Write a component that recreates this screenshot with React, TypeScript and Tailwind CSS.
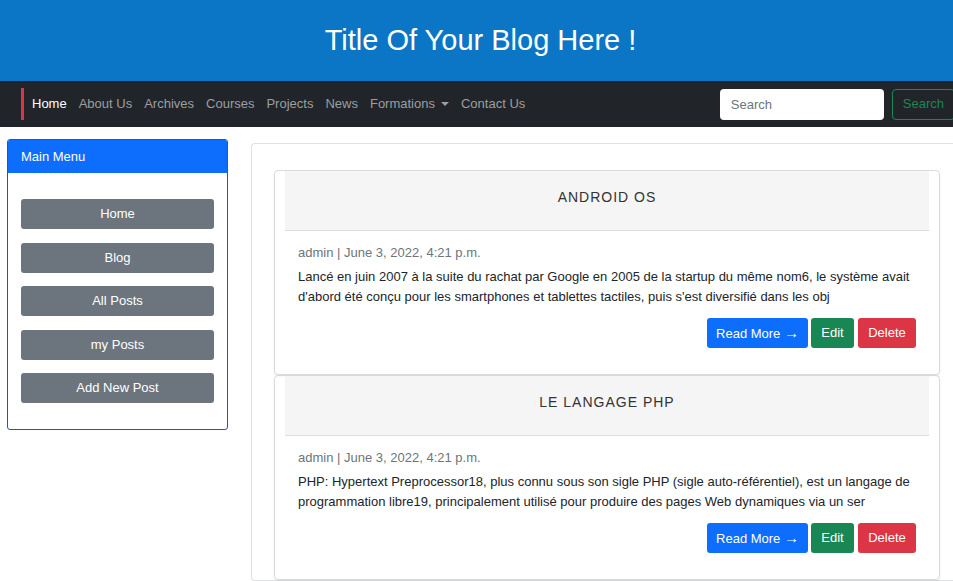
import React from "react"

const navLinks = ["About Us", "Archives", "Courses", "Projects", "News"]
const menu = ["Home", "Blog", "All Posts", "my Posts", "Add New Post"]

const posts = [
  {
    title: "ANDROID OS",
    meta: "admin | June 3, 2022, 4:21 p.m.",
    body: "Lancé en juin 2007 à la suite du rachat par Google en 2005 de la startup du même nom6, le système avait d'abord été conçu pour les smartphones et tablettes tactiles, puis s'est diversifié dans les obj",
  },
  {
    title: "LE LANGAGE PHP",
    meta: "admin | June 3, 2022, 4:21 p.m.",
    body: "PHP: Hypertext Preprocessor18, plus connu sous son sigle PHP (sigle auto-référentiel), est un langage de programmation libre19, principalement utilisé pour produire des pages Web dynamiques via un ser",
  },
]

export default function App() {
  return (
    <div className="min-h-[581px] bg-white overflow-hidden font-['Liberation_Sans',Arial,sans-serif]">
      {/* Title */}
      <header className="h-[81px] bg-[#0b76c5] flex items-center justify-center pl-[8px]">
        <h1 className="text-[29px] text-white">Title Of Your Blog Here !</h1>
      </header>

      {/* Navbar */}
      <nav className="h-[46px] bg-[#212529] flex items-center pl-[21px]">
        <div className="flex items-center text-[13px]">
          <a className="border-l-[3px] border-[#dc3545] h-[32px] flex items-center pl-[8px] pr-[6px] text-white">
            Home
          </a>
          {navLinks.map((l) => (
            <a key={l} className="px-[6px] text-[#9c9ea1]">
              {l}
            </a>
          ))}
          <a className="px-[6px] text-[#9c9ea1] flex items-center gap-[6px]">
            Formations
            <span className="w-0 h-0 border-l-[4px] border-r-[4px] border-t-[4px] border-l-transparent border-r-transparent border-t-[#9c9ea1]" />
          </a>
          <a className="px-[6px] text-[#9c9ea1]">Contact Us</a>
        </div>
        <div className="ml-auto flex items-center gap-[8px]">
          <input
            placeholder="Search"
            className="w-[164px] h-[31px] rounded-[4px] bg-white px-[11px] text-[13px] text-[#212529] placeholder:text-[#6c757d] outline-none"
          />
          <button className="h-[31px] rounded-[4px] border border-[#198754] text-[#198754] px-[10px] text-[13px] -mr-[2px]">
            Search
          </button>
        </div>
      </nav>

      <div className="flex items-start">
        {/* Sidebar */}
        <aside className="ml-[7px] mt-[12px] w-[221px] border border-[#2357a8] rounded-[3px] overflow-hidden">
          <div className="h-[33px] bg-[#0d6efd] text-white text-[13px] flex items-center pl-[13px]">Main Menu</div>
          <div className="flex flex-col gap-[13.5px] px-[13px] pt-[26px] pb-[26px]">
            {menu.map((m) => (
              <button key={m} className="h-[30px] rounded-[3px] bg-[#6c757d] text-white text-[13px]">
                {m}
              </button>
            ))}
          </div>
        </aside>

        {/* Main */}
        <main className="ml-[23px] mt-[16px] flex-1 border border-r-0 border-[#dee2e6] rounded-l-[4px] pl-[22px] pr-[13px] pt-[26px]">
          {posts.map((p) => (
            <article key={p.title} className="border border-[#dadada] rounded-[4px] shadow-[0_1px_2px_rgba(0,0,0,0.08)]">
              <div className="mx-[10px] h-[60px] bg-[#f5f5f5] border-b border-[#dcdcdc] flex items-center justify-center pb-[6px] text-[14px] text-[#333] tracking-[1px]">
                {p.title}
              </div>
              <div className="px-[23px] pt-[13px] pb-[26px]">
                <p className="text-[13px] text-[#6c757d] leading-[18px]">{p.meta}</p>
                <p className="mt-[5px] text-[13px] text-[#212529] leading-[20px]">{p.body}</p>
                <div className="mt-[11px] flex justify-end gap-[3px]">
                  <button className="h-[30px] w-[101px] rounded-[3px] bg-[#0d6efd] text-white text-[13px]">
                    Read More <span className="text-[15px]">→</span>
                  </button>
                  <button className="h-[30px] w-[43px] rounded-[3px] bg-[#198754] text-white text-[13px]">Edit</button>
                  <button className="h-[30px] w-[58px] rounded-[3px] bg-[#dc3545] text-white text-[13px] ml-px">Delete</button>
                </div>
              </div>
            </article>
          ))}
        </main>
      </div>
    </div>
  )
}
